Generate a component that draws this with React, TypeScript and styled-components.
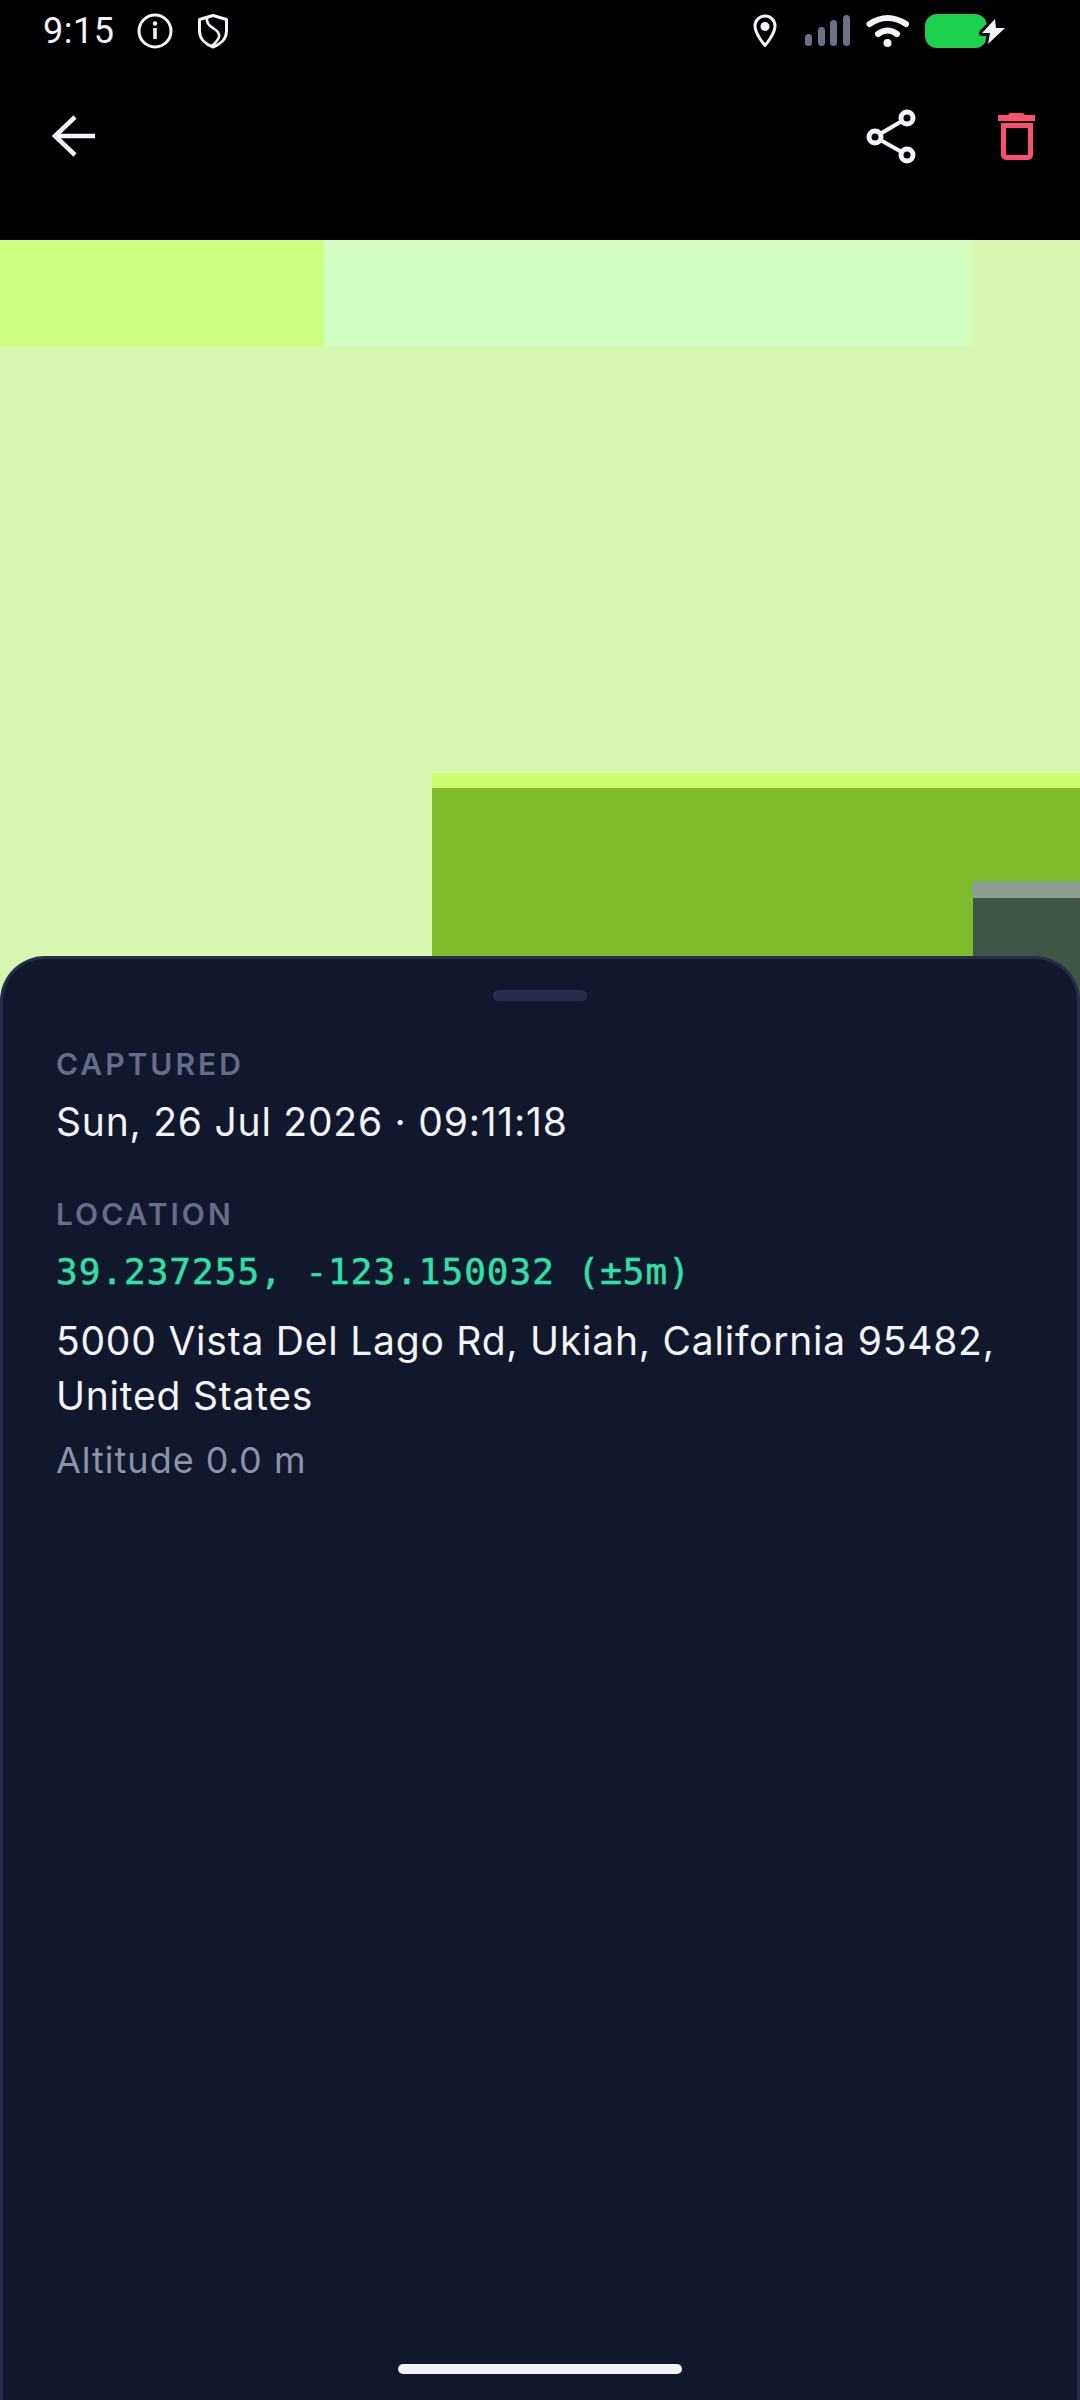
import styled, { createGlobalStyle } from "styled-components";

const GlobalStyle = createGlobalStyle`
  html, body {
    margin: 0;
    padding: 0;
    background: #000;
  }
  * {
    box-sizing: border-box;
  }
`;

const Page = styled.div`
  width: 1080px;
  height: 2400px;
  display: flex;
  flex-direction: column;
  background: #000;
  overflow: hidden;
  font-family: Inter, "Noto Sans", sans-serif;
`;

const StatusBar = styled.div`
  height: 62px;
  display: flex;
  align-items: center;
  padding: 0 73px 0 43px;
  color: #f2f4fa;
`;

const Clock = styled.span`
  width: 94px;
  font-family: Roboto, sans-serif;
  font-size: 36px;
  letter-spacing: 0.5px;
`;

const StatusLeft = styled.div`
  display: flex;
  align-items: center;
  gap: 22px;
`;

const StatusRight = styled.div`
  display: flex;
  align-items: center;
  margin-left: auto;
`;

const SignalIcon = styled.svg`
  margin-left: 26px;
`;

const WifiIcon = styled.svg`
  margin-left: 15px;
`;

const BatteryIcon = styled.svg`
  margin-left: 15px;
`;

const Toolbar = styled.div`
  height: 178px;
  display: flex;
  align-items: center;
  padding: 0 39px 30px 50px;
`;

const ToolbarActions = styled.div`
  display: flex;
  align-items: center;
  gap: 72px;
  margin-left: auto;
`;

const MapCanvas = styled.div`
  position: relative;
  height: 761px;
  flex: none;
  background: #d8f6b0;
  overflow: hidden;
`;

const MapBlock = styled.div<{ $x: number; $y: number; $w: number; $h: number; $color: string }>`
  position: absolute;
  left: ${(p) => p.$x}px;
  top: ${(p) => p.$y}px;
  width: ${(p) => p.$w}px;
  height: ${(p) => p.$h}px;
  background: ${(p) => p.$color};
`;

const Sheet = styled.div`
  position: relative;
  flex: 1;
  margin-top: -45px;
  display: flex;
  flex-direction: column;
  padding: 31px 53px 0;
  background: #12182b;
  border: 3px solid #272c4a;
  border-bottom: none;
  border-radius: 45px 45px 0 0;
`;

const Handle = styled.div`
  align-self: center;
  width: 94px;
  height: 11px;
  flex: none;
  border-radius: 6px;
  background: #272c4a;
`;

const Label = styled.div<{ $top: number }>`
  margin-top: ${(p) => p.$top}px;
  font-size: 30px;
  line-height: 34px;
  font-weight: 600;
  letter-spacing: 3px;
  color: #666d88;
`;

const DateValue = styled.div`
  margin-top: 18px;
  font-size: 39px;
  line-height: 46px;
  letter-spacing: 0.78px;
  color: #f2f4fa;
`;

const Coordinates = styled.div`
  margin-top: 19px;
  font-family: "DejaVu Sans Mono", monospace;
  font-size: 36px;
  line-height: 44px;
  letter-spacing: 1px;
  -webkit-text-stroke: 0.5px #2de2a6;
  color: #2de2a6;
`;

const Address = styled.div`
  margin-top: 19px;
  font-size: 39px;
  line-height: 55px;
  letter-spacing: 0.78px;
  color: #f2f4fa;
`;

const Altitude = styled.div`
  margin-top: 16px;
  font-size: 36px;
  line-height: 42px;
  letter-spacing: 1px;
  color: #8c92a8;
`;

const HomeIndicator = styled.div`
  align-self: center;
  width: 284px;
  height: 10px;
  flex: none;
  margin-top: auto;
  margin-bottom: 26px;
  border-radius: 5px;
  background: #f2f4fa;
`;

export default function App() {
  return (
    <Page>
      <GlobalStyle />
      <StatusBar>
        <Clock>9:15</Clock>
        <StatusLeft>
          <svg width="36" height="36" viewBox="0 0 36 36" fill="none">
            <circle cx="18" cy="18" r="16" stroke="#f2f4fa" strokeWidth="3" />
            <circle cx="18" cy="10.5" r="2.2" fill="#f2f4fa" />
            <rect x="16.2" y="15" width="3.6" height="11" fill="#f2f4fa" />
          </svg>
          <svg width="36" height="36" viewBox="0 0 36 36" fill="none">
            <path
              d="M18 2.5 L31.5 6.5 V18 C31.5 26 25 31.5 18 34 C11 31.5 4.5 26 4.5 18 V6.5 Z"
              stroke="#f2f4fa"
              strokeWidth="3"
              strokeLinejoin="round"
            />
            <path
              d="M12 4.5 C11 10 14.5 13 18 15 C22 17.5 25 20 24 24 C23 27.5 20 30 17 33"
              stroke="#f2f4fa"
              strokeWidth="2.6"
            />
          </svg>
        </StatusLeft>
        <StatusRight>
          <svg width="28" height="36" viewBox="0 0 28 36" fill="none">
            <path
              d="M14 32.5 C14 32.5 4 21 4 13 A10 10 0 0 1 24 13 C24 21 14 32.5 14 32.5 Z"
              stroke="#f2f4fa"
              strokeWidth="3"
              strokeLinejoin="round"
            />
            <circle cx="14" cy="13.5" r="4.5" fill="#f2f4fa" />
          </svg>
          <SignalIcon width="46" height="36" viewBox="0 0 46 36" fill="#6b7288">
            <rect x="0" y="21" width="7" height="12" rx="3.5" />
            <rect x="13" y="14" width="7" height="19" rx="3.5" />
            <rect x="25" y="7" width="7" height="26" rx="3.5" />
            <rect x="38" y="2" width="7" height="31" rx="3.5" />
          </SignalIcon>
          <WifiIcon width="44" height="36" viewBox="0 0 44 36" fill="none">
            <path d="M3.5 11 Q21.5 -1 40 11" stroke="#f2f4fa" strokeWidth="6" strokeLinecap="round" />
            <path d="M12 21 Q21.5 14 31 21" stroke="#f2f4fa" strokeWidth="6" strokeLinecap="round" />
            <circle cx="21.5" cy="30" r="4" fill="#f2f4fa" />
          </WifiIcon>
          <BatteryIcon width="82" height="36" viewBox="0 0 82 36" fill="none">
            <rect x="0" y="1" width="62" height="34" rx="12" fill="#1ccf4d" />
            <path
              d="M70 6 L57 20 H65 L63 31 L80 15 H71 Z"
              fill="#f2f4fa"
              stroke="#000"
              strokeWidth="6"
              paintOrder="stroke"
              strokeLinejoin="round"
            />
          </BatteryIcon>
        </StatusRight>
      </StatusBar>

      <Toolbar>
        <svg width="48" height="48" viewBox="0 0 48 48" fill="none">
          <path
            d="M45 24 H6 M25 5 L5 24 L25 43"
            stroke="#f2f4fa"
            strokeWidth="4.5"
          />
        </svg>
        <ToolbarActions>
          <svg width="60" height="60" viewBox="0 0 60 60" fill="none">
            <path d="M46 12 L14 31 L46 49" stroke="#f2f4fa" strokeWidth="4" />
            <circle cx="46" cy="12" r="6" fill="#000" stroke="#f2f4fa" strokeWidth="5" />
            <circle cx="14" cy="31" r="6" fill="#000" stroke="#f2f4fa" strokeWidth="5" />
            <circle cx="46" cy="49" r="6" fill="#000" stroke="#f2f4fa" strokeWidth="5" />
          </svg>
          <svg width="48" height="50" viewBox="0 0 48 50" fill="none">
            <path d="M5 4 H15 L17 2 H30 L32 4 H42 V10 H5 Z" fill="#fb4f6e" />
            <path
              d="M10.5 14.5 H37.5 V44 A2.5 2.5 0 0 1 35 46.5 H13 A2.5 2.5 0 0 1 10.5 44 Z"
              stroke="#fb4f6e"
              strokeWidth="5"
            />
          </svg>
        </ToolbarActions>
      </Toolbar>

      <MapCanvas>
        <MapBlock $x={0} $y={0} $w={324} $h={107} $color="#ccff80" />
        <MapBlock $x={324} $y={0} $w={647} $h={107} $color="#d3fcc0" />
        <MapBlock $x={432} $y={533} $w={648} $h={15} $color="#ccff70" />
        <MapBlock $x={432} $y={548} $w={648} $h={213} $color="#7dbc2a" />
        <MapBlock $x={972} $y={641} $w={108} $h={17} $color="#8d9d90" />
        <MapBlock $x={973} $y={658} $w={107} $h={103} $color="#3f5545" />
      </MapCanvas>

      <Sheet>
        <Handle />
        <Label $top={46}>CAPTURED</Label>
        <DateValue>Sun, 26 Jul 2026 · 09:11:18</DateValue>
        <Label $top={52}>LOCATION</Label>
        <Coordinates>39.237255, -123.150032 (±5m)</Coordinates>
        <Address>5000 Vista Del Lago Rd, Ukiah, California 95482, United States</Address>
        <Altitude>Altitude 0.0 m</Altitude>
        <HomeIndicator />
      </Sheet>
    </Page>
  );
}
